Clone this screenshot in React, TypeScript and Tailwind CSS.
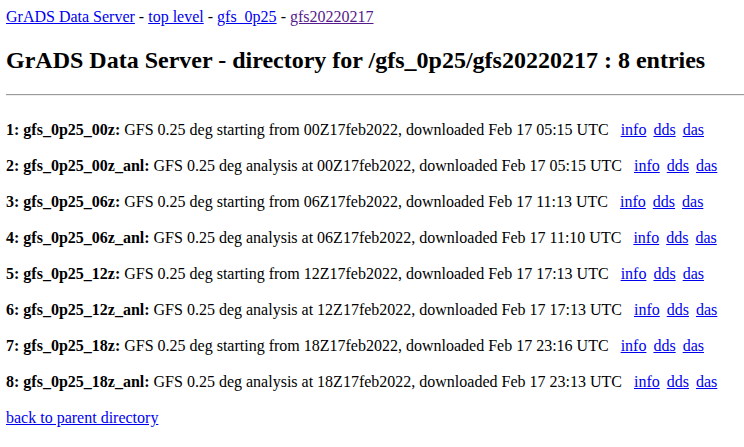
const ENTRIES = [
  { name: "gfs_0p25_00z", desc: "GFS 0.25 deg starting from 00Z17feb2022, downloaded Feb 17 05:15 UTC" },
  { name: "gfs_0p25_00z_anl", desc: "GFS 0.25 deg analysis at 00Z17feb2022, downloaded Feb 17 05:15 UTC" },
  { name: "gfs_0p25_06z", desc: "GFS 0.25 deg starting from 06Z17feb2022, downloaded Feb 17 11:13 UTC" },
  { name: "gfs_0p25_06z_anl", desc: "GFS 0.25 deg analysis at 06Z17feb2022, downloaded Feb 17 11:10 UTC" },
  { name: "gfs_0p25_12z", desc: "GFS 0.25 deg starting from 12Z17feb2022, downloaded Feb 17 17:13 UTC" },
  { name: "gfs_0p25_12z_anl", desc: "GFS 0.25 deg analysis at 12Z17feb2022, downloaded Feb 17 17:13 UTC" },
  { name: "gfs_0p25_18z", desc: "GFS 0.25 deg starting from 18Z17feb2022, downloaded Feb 17 23:16 UTC" },
  { name: "gfs_0p25_18z_anl", desc: "GFS 0.25 deg analysis at 18Z17feb2022, downloaded Feb 17 23:13 UTC" },
];

const link = "text-[#0000EE] underline";

export default function App() {
  return (
    <div className="min-h-[447px] bg-white text-black font-['Liberation_Serif','Times_New_Roman',serif] text-[16px] leading-[18px] pt-2 pl-[6px] overflow-hidden">
      <div>
        <a className={link}>GrADS Data Server</a> - <a className={link}>top level</a> -{" "}
        <a className={link}>gfs_0p25</a> - <a className="text-[#551A8B] underline">gfs20220217</a>
      </div>

      <h2 className="mt-5 mb-5 text-[24px] leading-[28px] font-bold">
        GrADS Data Server - directory for /gfs_0p25/gfs20220217 : 8 entries
      </h2>

      <hr className="-mr-4 border-0 border-t border-t-[#9a9a9a] border-b border-b-[#eeeeee]" />

      <div className="mt-[25px] flex flex-col gap-[18px]">
        {ENTRIES.map((e, i) => (
          <div key={e.name} className="whitespace-nowrap">
            <b>
              {i + 1}: {e.name}:
            </b>{" "}
            {e.desc}
            <span className="ml-3">
              <a className={link}>info</a>
              <a className={`${link} ml-[7px]`}>dds</a>
              <a className={`${link} ml-[7px]`}>das</a>
            </span>
          </div>
        ))}
        <div>
          <a className={link}>back to parent directory</a>
        </div>
      </div>
    </div>
  );
}
